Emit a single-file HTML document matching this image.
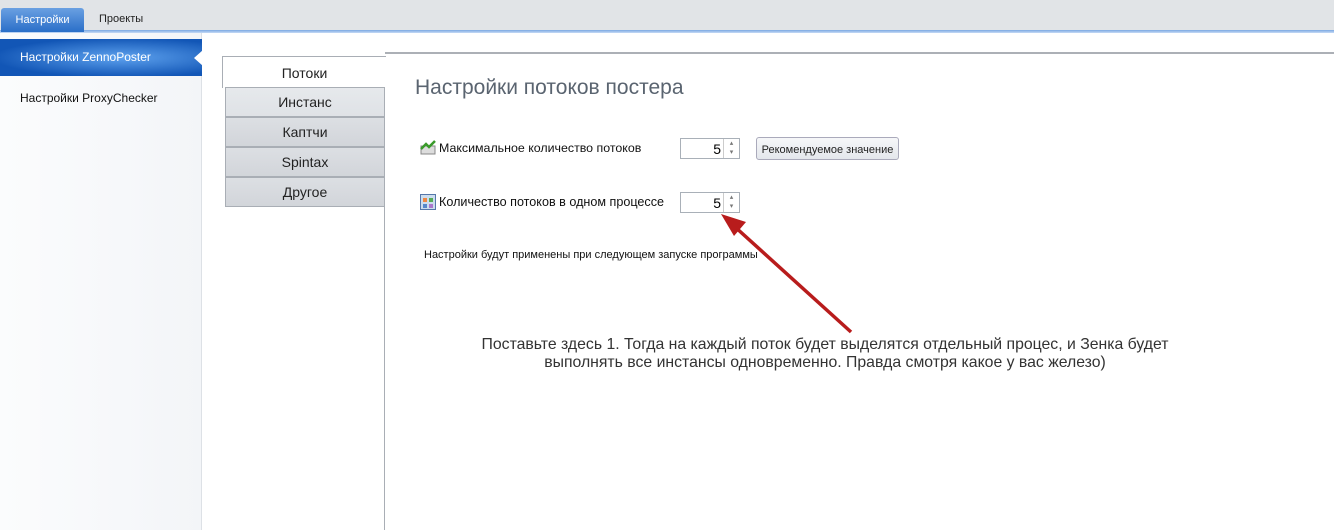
<html><head><style>
body{margin:0;width:1334px;height:530px;position:relative;overflow:hidden;background:#fff;font-family:"Liberation Sans","DejaVu Sans",sans-serif;}
div,span{position:absolute;box-sizing:border-box}
.tab{left:225px;width:160px;height:30px;border:1px solid #a9aeb5;background:linear-gradient(#dcdfe3,#d2d5da);text-align:center;line-height:29px;font-size:14px;color:#222}
.sp{width:60px;height:21px;border:1px solid #a9b0b8;background:#fff;font-size:14px}
</style></head><body>
<div style="left:0;top:0;width:1334px;height:31px;background:#e1e4e7"></div>
<div style="left:0;top:30px;width:1334px;height:3px;background:linear-gradient(#7aa7e2,#c7dbf5)"></div>
<div style="left:1px;top:8px;width:83px;height:24px;background:linear-gradient(#6aa0e2,#2a6fc8);border-radius:3px 3px 0 0;color:#fff;font-size:11px;text-align:center;line-height:24px">Настройки</div>
<div style="left:99px;top:13px;font-size:11px;color:#222">Проекты</div>
<div style="left:0;top:33px;width:202px;height:497px;background:linear-gradient(90deg,#fbfcfd,#f3f5f8);border-right:1px solid #dde1e6"></div>
<div style="left:0;top:39px;width:202px;height:37px;background:radial-gradient(ellipse at 60% 50%,#5ea2ee,#1256b6 75%);color:#fff;font-size:12px;line-height:37px;padding-left:20px">Настройки ZennoPoster</div>
<div style="left:194px;top:50px;width:0;height:0;border-top:8px solid transparent;border-bottom:8px solid transparent;border-right:9px solid #fff"></div>
<div style="left:20px;top:91px;font-size:12px;color:#111">Настройки ProxyChecker</div>
<div style="left:385px;top:52px;width:949px;height:2px;background:#acb0b6"></div>
<div style="left:384px;top:87px;width:1px;height:443px;background:#a9aeb5"></div>
<div style="left:222px;top:56px;width:164px;height:32px;border:1px solid #a9aeb5;border-right:none;border-bottom:none;background:#fff;text-align:center;line-height:32px;font-size:14px;color:#222">Потоки</div>
<div class="tab" style="top:87px;background:linear-gradient(#e6e9ec,#dfe2e6)">Инстанс</div>
<div class="tab" style="top:117px">Каптчи</div>
<div class="tab" style="top:147px">Spintax</div>
<div class="tab" style="top:177px">Другое</div>
<div style="left:415px;top:76px;font-size:21px;color:#5a6470">Настройки потоков постера</div>
<svg style="position:absolute;left:420px;top:139px" width="17" height="16"><rect x="1" y="7" width="14" height="8" fill="#ddd" stroke="#888"/><path d="M1 10 L6 5 L9 8 L15 2" stroke="#3a9a2a" stroke-width="2.5" fill="none"/></svg>
<div style="left:439px;top:141px;font-size:12.4px;color:#111">Максимальное количество потоков</div>
<div class="sp" style="left:680px;top:138px"><span style="right:18px;top:2px">5</span><span style="right:0;top:0;width:16px;height:19px;border-left:1px solid #ccc;font-size:7px;color:#777;text-align:center;line-height:9px">▴<br>▾</span></div>
<div style="left:756px;top:137px;width:143px;height:23px;border:1px solid #aab;border-radius:3px;background:linear-gradient(#f6f7f9,#e4e7ec);font-size:11px;color:#222;text-align:center;line-height:24px">Рекомендуемое значение</div>
<svg style="position:absolute;left:420px;top:194px" width="16" height="16"><rect x="0.5" y="0.5" width="15" height="15" fill="#cde" stroke="#57a"/><rect x="3" y="4" width="4" height="4" fill="#e84"/><rect x="9" y="4" width="4" height="4" fill="#5a5"/><rect x="3" y="10" width="4" height="4" fill="#58c"/><rect x="9" y="10" width="4" height="4" fill="#a7c"/></svg>
<div style="left:439px;top:195px;font-size:12.6px;color:#111">Количество потоков в одном процессе</div>
<div class="sp" style="left:680px;top:192px"><span style="right:18px;top:2px">5</span><span style="right:0;top:0;width:16px;height:19px;border-left:1px solid #ccc;font-size:7px;color:#777;text-align:center;line-height:9px">▴<br>▾</span></div>
<div style="left:424px;top:249px;font-size:11px;color:#111">Настройки будут применены при следующем запуске программы</div>
<svg style="position:absolute;left:0;top:0" width="1334" height="530"><line x1="851" y1="332" x2="734" y2="226" stroke="#b81c1c" stroke-width="3.5"/><polygon points="721,214 746,222 734,236" fill="#b81c1c"/></svg>
<div style="left:440px;top:336px;width:770px;text-align:center;font-size:15.8px;line-height:18px;color:#333">Поставьте здесь 1. Тогда на каждый поток будет выделятся отдельный процес, и Зенка будет<br>выполнять все инстансы одновременно. Правда смотря какое у вас железо)</div>
</body></html>
